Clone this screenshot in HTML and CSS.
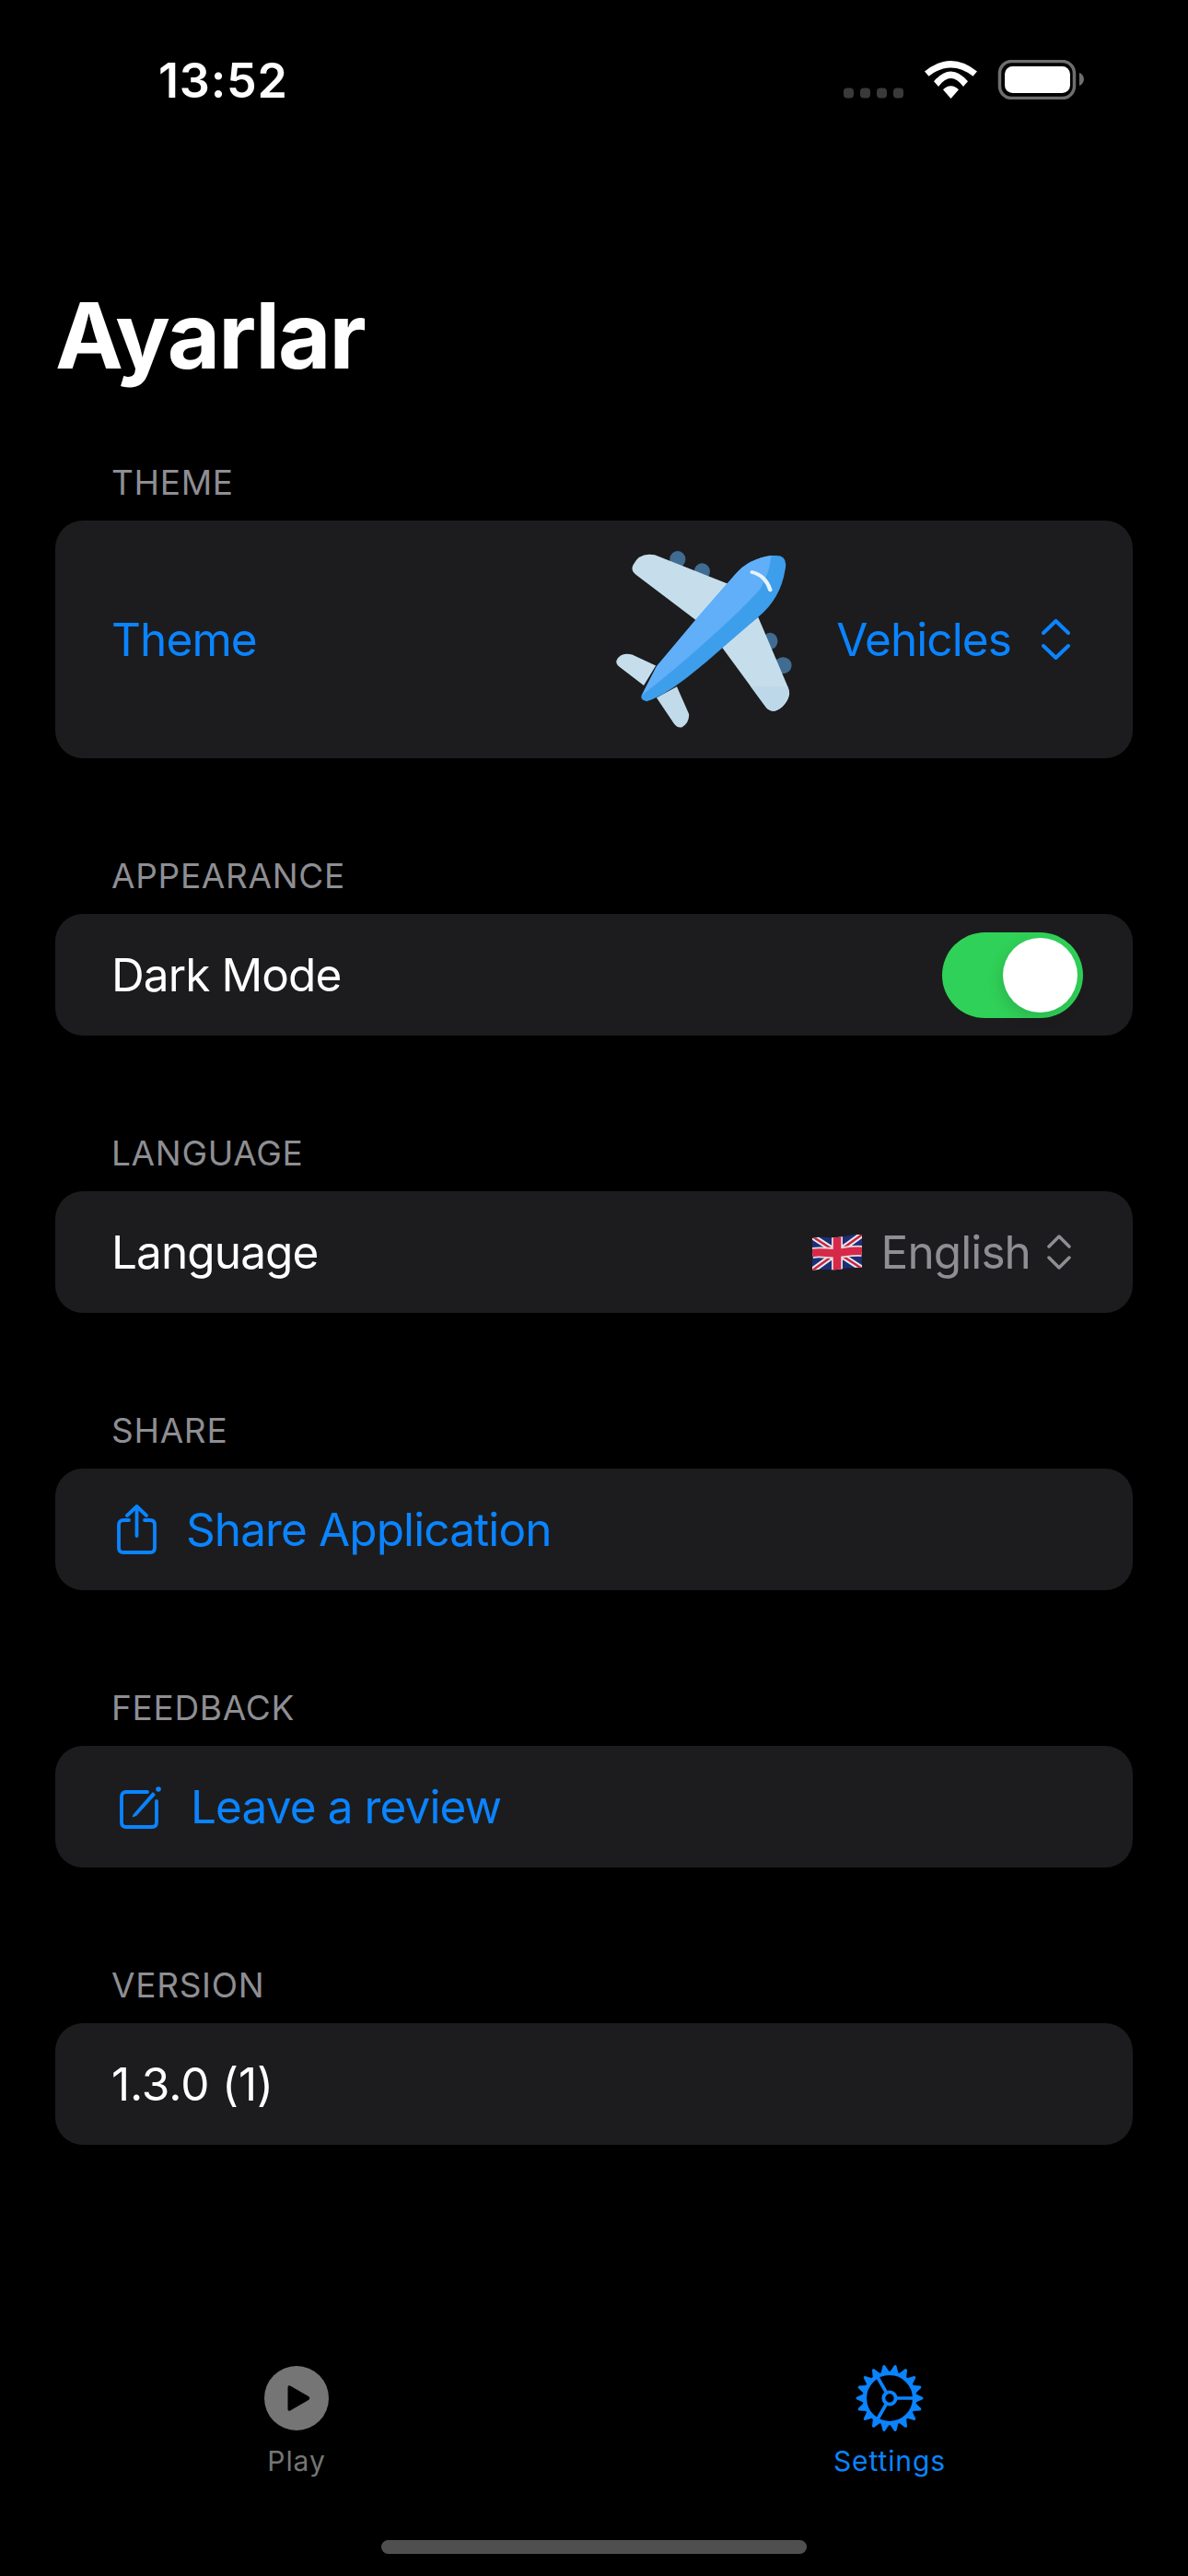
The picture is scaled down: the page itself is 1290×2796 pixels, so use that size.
FILE: index.html
```html
<!DOCTYPE html>
<html lang="en">
<head>
  <meta charset="UTF-8">
  <title>Ayarlar</title>
  <link rel="stylesheet" href="styles.css">
</head>
<body>
  <div id="screen">
    <!-- Status bar -->
    <div class="status">
      <span class="time">13:52</span>
      <svg class="status-icons" viewBox="916 65 261 43" width="261" height="43">
        <g fill="#3a3a3c">
          <rect x="916" y="95.500" width="11" height="11" rx="4"/>
          <rect x="934" y="95.500" width="11" height="11" rx="4"/>
          <rect x="952" y="95.500" width="11" height="11" rx="4"/>
          <rect x="970" y="95.500" width="11" height="11" rx="4"/>
        </g>
        <g fill="#fff">
          <path d="M1004 77.500Q1032.500 54.500 1061 77.500L1056.500 82.700Q1032.500 64.300 1008.500 82.700Z"/>
          <path d="M1014 88.300Q1032.500 66.500 1051 88.300L1046 94Q1032.500 76 1019 94Z"/>
          <path d="M1024 97.300Q1032.500 89 1041 97.300L1032.500 107Z"/>
        </g>
        <rect x="1085.500" y="66.500" width="81" height="40" rx="13" fill="none" stroke="#6e6e70" stroke-width="3.500"/>
        <rect x="1091" y="72" width="71" height="29" rx="8.500" fill="#fff"/>
        <path d="M1172 79C1175 80 1177 83 1177 86C1177 89 1175 92 1172 93Z" fill="#6e6e70"/>
      </svg>
    </div>

    <h1 class="title">Ayarlar</h1>

    <!-- Settings sections -->
    <section class="group">
      <div class="group-label">THEME</div>
      <div class="card card-tall">
        <span class="blue">Theme</span>
        <div class="row-right">
          <svg class="plane" viewBox="120 115 470 575" width="192" height="192" preserveAspectRatio="none">
            <g fill="#416c91">
              <ellipse cx="286" cy="142" rx="21" ry="27"/>
              <ellipse cx="351" cy="182" rx="21" ry="27"/>
              <ellipse cx="532" cy="408" rx="20" ry="27"/>
              <ellipse cx="566" cy="487" rx="23" ry="27"/>
            </g>
            <path d="M168 160Q185 118 225 128L420 222L340 345L175 192Q160 178 168 160Z" fill="#c6deec"/>
            <path d="M500 330L580 560Q590 590 565 620Q540 648 522 625L402 425Z" fill="#c6deec"/>
            <path d="M480 555L578 555Q590 590 565 620Q540 648 522 625Z" fill="#bdd8e9"/>
            <path d="M124 470Q135 442 165 452L228 488L196 552L132 492Q120 482 124 470Z" fill="#c6deec"/>
            <path d="M230 592L284 556L316 645Q318 672 298 688Q285 692 276 676Z" fill="#c2dbea"/>
            <path d="M190 585Q186 600 205 604C240 590 290 555 405 430L500 330Q560 270 572 175Q580 128 545 130L535 130Q475 140 440 190L340 330L230 490Z" fill="#3d9eeb"/>
            <path d="M190 585L230 490L340 330L440 190Q475 140 535 130Q530 190 505 240Q445 320 370 400Q280 500 190 585Z" fill="#60aff8"/>
            <path d="M484 184Q520 195 532 242" fill="none" stroke="#e9f3fb" stroke-width="11" stroke-linecap="round"/>
          </svg>
          <span class="blue">Vehicles</span>
          <svg class="updown" viewBox="0 0 31 44" width="31" height="44">
            <path d="M2 15L15.500 2L29 15M2 29L15.500 42L29 29" fill="none" stroke="#0a84ff" stroke-width="4" stroke-linecap="round" stroke-linejoin="round"/>
          </svg>
        </div>
      </div>
    </section>

    <section class="group">
      <div class="group-label">APPEARANCE</div>
      <div class="card">
        <span>Dark Mode</span>
        <div class="switch"><div class="knob"></div></div>
      </div>
    </section>

    <section class="group">
      <div class="group-label">LANGUAGE</div>
      <div class="card">
        <span>Language</span>
        <div class="row-right">
          <svg class="flag" viewBox="0 0 54 39" width="54" height="39">
            <clipPath id="wave">
              <path d="M0 4C10 1 16 4 27 3C38 2 46 -1 54 0L54 36C46 35 38 37 27 38C16 39 8 37 0 39Z"/>
            </clipPath>
            <g clip-path="url(#wave)">
              <rect width="54" height="39" fill="#1a2f75"/>
              <path d="M0 2L54 37M54 0L0 39" stroke="#e8e8ee" stroke-width="6.500"/>
              <path d="M0 2L54 37M54 0L0 39" stroke="#c9243c" stroke-width="2.500"/>
              <path d="M27 0V39M0 20C10 18 18 21 27 20C36 19 46 17 54 18" fill="none" stroke="#ecd9de" stroke-width="12"/>
              <path d="M27 0V39M0 20C10 18 18 21 27 20C36 19 46 17 54 18" fill="none" stroke="#d6294a" stroke-width="8.500"/>
            </g>
          </svg>
          <span class="grey">English</span>
          <svg class="updown updown-small" viewBox="0 0 26 38" width="26" height="38">
            <path d="M2 13L13 2L24 13M2 25L13 36L24 25" fill="none" stroke="#8e8e93" stroke-width="3.500" stroke-linecap="round" stroke-linejoin="round"/>
          </svg>
        </div>
      </div>
    </section>

    <section class="group">
      <div class="group-label">SHARE</div>
      <div class="card card-action">
        <svg class="action-icon" viewBox="0 0 43 54" width="43" height="54">
          <path d="M13 17H7Q2 17 2 22V47Q2 52 7 52H36Q41 52 41 47V22Q41 17 36 17H30" fill="none" stroke="#0a84ff" stroke-width="3.800" stroke-linecap="round"/>
          <path d="M21.500 34V2M11 12L21.500 2L32 12" fill="none" stroke="#0a84ff" stroke-width="3.800" stroke-linecap="round" stroke-linejoin="round"/>
        </svg>
        <span class="blue">Share Application</span>
      </div>
    </section>

    <section class="group">
      <div class="group-label">FEEDBACK</div>
      <div class="card card-action">
        <svg class="action-icon review-icon" viewBox="0 0 46 48" width="46" height="48">
          <path d="M30 8H7Q2 8 2 13V41Q2 46 7 46H35Q40 46 40 41V18" fill="none" stroke="#0a84ff" stroke-width="3.800" stroke-linecap="round"/>
          <path d="M16 32L14.500 34.500L18 33L38 11L36 9Z" fill="#0a84ff" stroke="#0a84ff" stroke-width="1.500" stroke-linejoin="round"/>
          <circle cx="42" cy="5" r="2.800" fill="#0a84ff"/>
        </svg>
        <span class="blue">Leave a review</span>
      </div>
    </section>

    <section class="group">
      <div class="group-label">VERSION</div>
      <div class="card">
        <span class="version">1.3.0 (1)</span>
      </div>
    </section>

    <!-- Tab bar -->
    <nav class="tabbar">
      <div class="tab">
        <svg viewBox="0 0 74 74" width="74" height="74">
          <circle cx="37" cy="37" r="35" fill="#757575"/>
          <path d="M27.500 25.500Q27.500 22 30.500 23.700L50 35Q52.500 37 50 39L30.500 50.300Q27.500 52 27.500 48.500Z" fill="#000"/>
        </svg>
        <span class="tab-label">Play</span>
      </div>
      <div class="tab tab-active">
        <svg viewBox="-37.500 -37.500 75 75" width="74" height="74">
          <defs>
            <path id="tooth" d="M-4.500 -29L-1.300 -36.300Q0 -37.800 1.300 -36.300L4.500 -29Z" fill="#0a84ff"/>
          </defs>
          <use href="#tooth" transform="rotate(10)"/>
          <use href="#tooth" transform="rotate(30)"/>
          <use href="#tooth" transform="rotate(50)"/>
          <use href="#tooth" transform="rotate(70)"/>
          <use href="#tooth" transform="rotate(90)"/>
          <use href="#tooth" transform="rotate(110)"/>
          <use href="#tooth" transform="rotate(130)"/>
          <use href="#tooth" transform="rotate(150)"/>
          <use href="#tooth" transform="rotate(170)"/>
          <use href="#tooth" transform="rotate(190)"/>
          <use href="#tooth" transform="rotate(210)"/>
          <use href="#tooth" transform="rotate(230)"/>
          <use href="#tooth" transform="rotate(250)"/>
          <use href="#tooth" transform="rotate(270)"/>
          <use href="#tooth" transform="rotate(290)"/>
          <use href="#tooth" transform="rotate(310)"/>
          <use href="#tooth" transform="rotate(330)"/>
          <use href="#tooth" transform="rotate(350)"/>
          <g fill="none" stroke="#0a84ff">
            <circle r="27.500" stroke-width="4.500"/>
            <path d="M8 0H28M-4 -7L-14 -24.300M-4 7L-14 24.300" stroke-width="3.800"/>
            <circle r="6.700" stroke-width="4"/>
          </g>
        </svg>
        <span class="tab-label">Settings</span>
      </div>
    </nav>

    <div class="home-indicator"></div>
  </div>
</body>
</html>
```

FILE: styles.css
```css
body {
  margin: 0;
  background: #000;
  color: #fff;
  font-family: Inter, "Liberation Sans", sans-serif;
}
#screen {
  width: 1290px;
  height: 2796px;
  display: flex;
  flex-direction: column;
  overflow: hidden;
}

/* status bar */
.status {
  height: 304px;
  box-sizing: border-box;
  padding: 65px 113px 0 172px;
  display: flex;
  justify-content: space-between;
  align-items: flex-start;
}
.time {
  font-size: 52px;
  font-weight: 600;
  line-height: 46px;
  letter-spacing: 0.800px;
}

.title {
  margin: 0 0 69px 60px;
  font-size: 99px;
  font-weight: 700;
  line-height: 120px;
  letter-spacing: -2px;
}

/* groups */
.group {
  margin: 0 60px 97px;
}
.group-label {
  margin: 0 0 11px 61px;
  font-size: 37px;
  line-height: 61px;
  letter-spacing: 0.700px;
  color: #8e8e93;
}
.card {
  height: 132px;
  box-sizing: border-box;
  padding: 0 54px 0 61px;
  display: flex;
  justify-content: space-between;
  align-items: center;
  background: #1c1c1e;
  border-radius: 30px;
  font-size: 49.500px;
  letter-spacing: -0.900px;
}
.card-tall {
  height: 258px;
}
.card-action {
  justify-content: flex-start;
  padding-left: 67px;
  gap: 32px;
}
.blue {
  color: #0a84ff;
}
.grey {
  color: #8e8e93;
}
.version {
  letter-spacing: -0.100px;
}
.row-right {
  display: flex;
  align-items: center;
}
.plane {
  margin-right: 48px;
}
.flag {
  margin-right: 21px;
}
.updown {
  margin: 0 14px 0 33px;
}
.updown-small {
  margin: 0 13px 0 18px;
}
.review-icon {
  margin-left: 3px;
  margin-right: -1px;
}

.switch {
  width: 153px;
  height: 93px;
  box-sizing: border-box;
  padding: 6px;
  display: flex;
  justify-content: flex-end;
  background: #30d158;
  border-radius: 47px;
}
.knob {
  width: 81px;
  height: 81px;
  background: #fff;
  border-radius: 50%;
  box-shadow: -3px 6px 16px rgba(0, 0, 0, 0.12);
}

/* tab bar */
.tabbar {
  margin-top: auto;
  padding-right: 2px;
  display: flex;
}
.tab {
  flex: 1;
  display: flex;
  flex-direction: column;
  align-items: center;
  color: #757575;
}
.tab svg {
  display: block;
}
.tab-active {
  color: #0a84ff;
}
.tab-label {
  margin-top: 11px;
  font-size: 30px;
  line-height: 40px;
  letter-spacing: 0.900px;
}
.home-indicator {
  width: 462px;
  height: 15px;
  margin: 66px auto 24px;
  background: #4f4f4f;
  border-radius: 8px;
}
```
